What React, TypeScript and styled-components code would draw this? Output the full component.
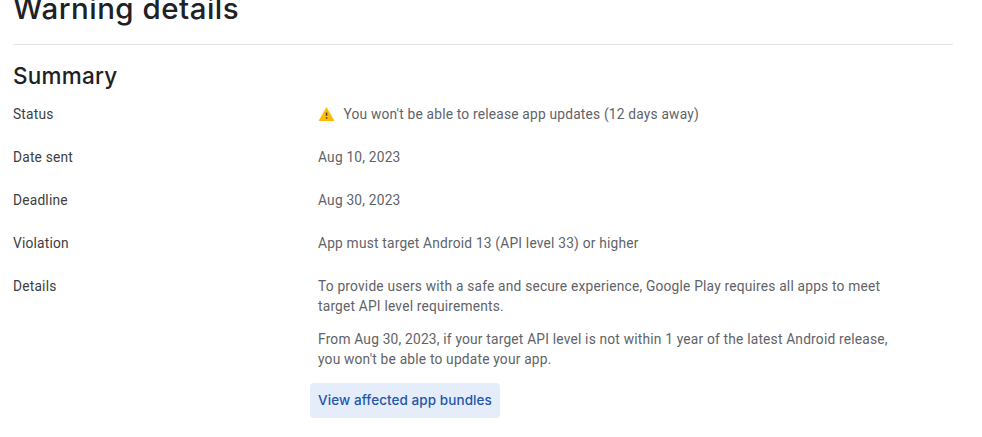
import React from 'react';
import styled, { createGlobalStyle } from 'styled-components';

const Global = createGlobalStyle`
  * { box-sizing: border-box; }
  body { margin: 0; background: #fff; overflow: hidden; font-family: Roboto, sans-serif; }
`;
const Page = styled.main`
  width: 982px; height: 437px; overflow: hidden; padding: 0 29px 0 13px;
`;
const Title = styled.h1`
  margin: -11px 0 0; height: 55px; font: 500 29.5px/38px Inter, sans-serif; letter-spacing: 0.48px;
  color: #202124; white-space: nowrap;
`;
const Rule = styled.hr`
  margin: 0; border: 0; height: 1px; background: #e2e3e4;
`;
const Heading = styled.h2`
  margin: 16px 0 0; height: 43.5px; font: 500 22.5px/30px Inter, sans-serif; letter-spacing: 0.25px;
  color: #202124; white-space: nowrap;
`;
const Row = styled.div`
  display: grid; grid-template-columns: 305px 1fr; font-size: 13.75px; line-height: 19.7px;
  letter-spacing: 0.2px; min-height: 43.2px; white-space: nowrap;
`;
const Label = styled.div` color: #3c4043; `;
const Value = styled.div` color: #5f6368; `;
const Status = styled.div` display: flex; align-items: center; gap: 8.5px; `;
const Paragraph = styled.p` margin: 0 0 13.4px; `;
const Button = styled.button`
  display: block; margin: 13px 0 0 -8px; width: 190px; height: 35px; padding: 0; border: 0; border-radius: 4px;
  background: #e6edfa; color: #2457ae; font: 500 13.5px/20px Inter, sans-serif; letter-spacing: 0.07px;
`;
export default function App() {
  return (
    <Page>
      <Global />
      <Title>Warning details</Title>
      <Rule />
      <Heading>Summary</Heading>
      <Row>
        <Label>Status</Label>
        <Value>
          <Status>
            <svg width="17" height="14" viewBox="0 0 17 14">
              <path d="M8.5 0 16.5 14H.5z" fill="#fbbc04" />
              <path d="M7.8 5.5h1.5v3.2H7.8zM7.8 10.2h1.5v1.6H7.8z" fill="#3c4043" />
            </svg>
            <span>You won't be able to release app updates (12 days away)</span>
          </Status>
        </Value>
      </Row>
      <Row><Label>Date sent</Label><Value>Aug 10, 2023</Value></Row>
      <Row><Label>Deadline</Label><Value>Aug 30, 2023</Value></Row>
      <Row><Label>Violation</Label><Value>App must target Android 13 (API level 33) or higher</Value></Row>
      <Row>
        <Label>Details</Label>
        <Value>
          <Paragraph>
            To provide users with a safe and secure experience, Google Play requires all apps to meet<br />
            target API level requirements.
          </Paragraph>
          <Paragraph>
            From Aug 30, 2023, if your target API level is not within 1 year of the latest Android release,<br />
            you won't be able to update your app.
          </Paragraph>
          <Button>View affected app bundles</Button>
        </Value>
      </Row>
    </Page>
  );
}
